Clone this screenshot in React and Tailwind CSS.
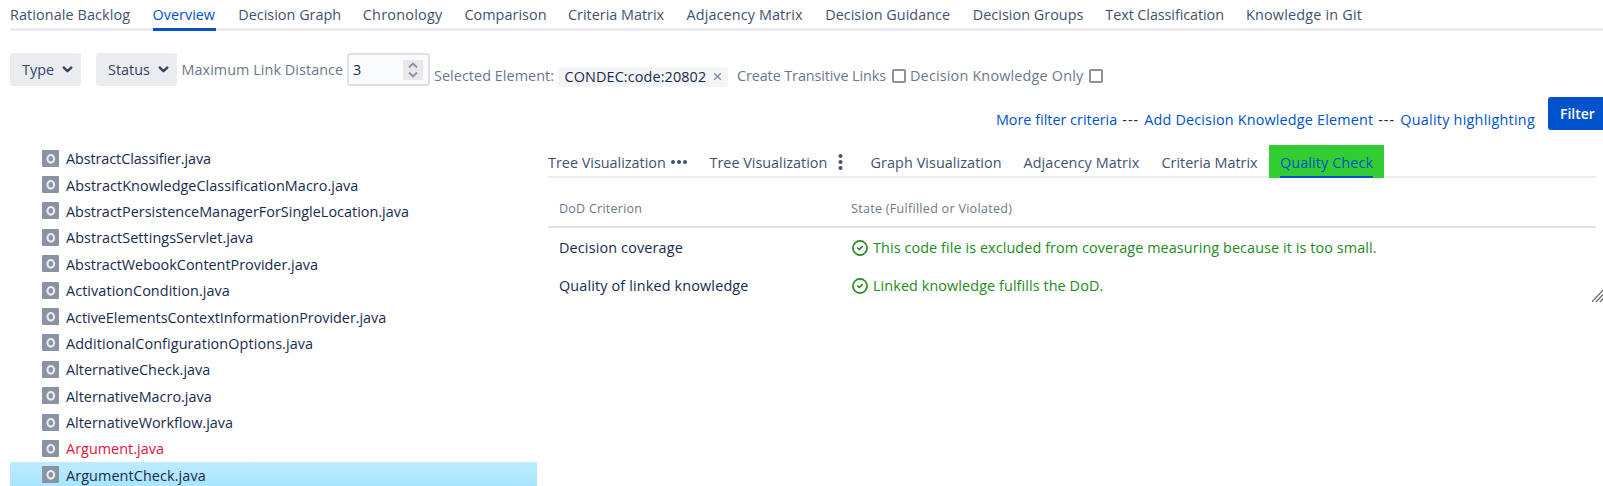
import { Fragment } from "react";

const mainTabs = [
  ["Rationale Backlog", "w-[120px] tracking-[0.1px]"],
  ["Overview", "w-[63px]"],
  ["Decision Graph", "w-[102px] tracking-[0.02px]"],
  ["Chronology", "w-[79px] tracking-[0.25px]"],
  ["Comparison", "w-[81px] tracking-[0.05px]"],
  ["Criteria Matrix", "w-[96px]"],
  ["Adjacency Matrix", "w-[116px] tracking-[0.12px]"],
  ["Decision Guidance", "w-[125px] tracking-[0.04px]"],
  ["Decision Groups", "w-[110px] tracking-[0.03px]"],
  ["Text Classification", "w-[118px] tracking-[-0.08px]"],
  ["Knowledge in Git", "w-[117px] tracking-[0.2px]"],
];

const files = [
  ["AbstractClassifier.java", "tracking-[-0.08px]"],
  ["AbstractKnowledgeClassificationMacro.java", "tracking-[0.05px]"],
  ["AbstractPersistenceManagerForSingleLocation.java", "tracking-[0.02px]"],
  ["AbstractSettingsServlet.java", "tracking-[0.06px]"],
  ["AbstractWebookContentProvider.java", ""],
  ["ActivationCondition.java", "tracking-[0.08px]"],
  ["ActiveElementsContextInformationProvider.java", "tracking-[-0.03px]"],
  ["AdditionalConfigurationOptions.java", "tracking-[0.1px]"],
  ["AlternativeCheck.java", "tracking-[0.03px]"],
  ["AlternativeMacro.java", ""],
  ["AlternativeWorkflow.java", ""],
  ["Argument.java", "tracking-[0.03px]"],
  ["ArgumentCheck.java", "tracking-[0.1px]"],
];

const links = [
  ["More filter criteria", ""],
  ["Add Decision Knowledge Element", "tracking-[0.17px]"],
  ["Quality highlighting", "tracking-[0.25px]"],
];

const criteria = [
  ["Decision coverage", "This code file is excluded from coverage measuring because it is too small.", "h-10"],
  ["Quality of linked knowledge", "Linked knowledge fulfills the DoD.", "h-[38px]"],
];

function Chevron() {
  return (
    <svg className="h-[7px] w-[11px]" viewBox="0 0 11 7" fill="none" stroke="#344563" strokeWidth="2.4" strokeLinecap="round" strokeLinejoin="round">
      <path d="M1.8 1.6 5.5 5.2 9.2 1.6" />
    </svg>
  );
}

function FileIcon() {
  return (
    <svg className="h-[17px] w-[17px] shrink-0" viewBox="0 0 17 17">
      <rect width="17" height="17" rx="1" fill="#8993a4" />
      <ellipse cx="8.8" cy="8.8" rx="3.3" ry="3.8" fill="none" stroke="#ebecf0" strokeWidth="2.1" />
    </svg>
  );
}

function CheckCircle() {
  return (
    <svg className="h-4 w-4 shrink-0" viewBox="0 0 16 16" fill="none" stroke="#228b22" strokeWidth="1.7" strokeLinecap="round" strokeLinejoin="round">
      <circle cx="8" cy="8" r="7.1" />
      <path d="M5.7 8 7.3 9.5 10.2 6.7" />
    </svg>
  );
}

function Checkbox() {
  return <span className="h-[14px] w-[14px] shrink-0 rounded-[2px] border-2 border-[#8f8f9d] bg-white" />;
}

export default function App() {
  return (
    <div className="h-[486px] w-[1603px] overflow-hidden whitespace-nowrap bg-white font-['Open_Sans',sans-serif] text-[14.4px] leading-5 text-[#172b4d]">
      <nav className="ml-[10px] flex h-[31px] gap-[22.6px] border-b-[3px] border-[#ebecf0] pt-[5px] text-[#42526e]">
        {mainTabs.map(([t, w]) => (
          <div key={t} className={`${w} h-[26px] shrink-0 ${t === "Overview" ? "border-b-[3px] border-[#0052cc] text-[#0052cc]" : ""}`}>
            {t}
          </div>
        ))}
      </nav>

      <div className="flex h-[66px] pl-[10px] pt-[22px] text-[#6b778c]">
        <button className="flex h-[33px] w-[71px] items-center justify-between rounded-[3px] bg-[#ebecf0] pl-3 pr-[8.5px] text-[#344563]">
          Type <Chevron />
        </button>
        <button className="ml-[15px] flex h-[33px] w-[81px] items-center justify-between rounded-[3px] bg-[#ebecf0] pl-3 pr-[8.5px] text-[#344563]">
          Status <Chevron />
        </button>
        <span className="ml-[4.5px] w-[165.5px] pt-[7px] tracking-[0.06px]">Maximum Link Distance</span>
        <div className="flex h-[33px] w-[83px] items-center justify-between rounded-[3px] border-2 border-[#dfe1e6] bg-[#fafbfc] pl-[4px] pr-[5px] text-[#172b4d]">
          3
          <span className="flex h-5 w-5 items-center justify-center bg-[#e9e9ed]">
            <svg className="h-4 w-[10px]" viewBox="0 0 10 16" fill="none" stroke="#8f8f9d" strokeWidth="1.8">
              <path d="M1 5.5 5 1.5 9 5.5M1 10.5 5 14.5 9 10.5" />
            </svg>
          </span>
        </div>
        <div className="ml-1 mt-[13px] flex h-5 items-center">
          <span className="w-[124px] tracking-[0.05px]">Selected Element:</span>
          <span className="mt-[1px] flex h-5 w-[170px] items-center justify-between rounded-[3px] bg-[#f4f5f7] pl-[6.5px] pr-[6px] tracking-[0.12px] text-[#172b4d]">
            CONDEC:code:20802
            <svg className="h-[9px] w-[9px]" viewBox="0 0 9 9" stroke="#8993a4" strokeWidth="1.6">
              <path d="M1.2 1.2 7.8 7.8M7.8 1.2 1.2 7.8" />
            </svg>
          </span>
          <span className="ml-[9px] w-[154.5px] tracking-[-0.1px]">Create Transitive Links</span>
          <Checkbox />
          <span className="ml-[4.5px] w-[178.5px] tracking-[0.18px]">Decision Knowledge Only</span>
          <Checkbox />
        </div>
      </div>

      <div className="flex h-[48px] justify-end text-[#0052cc]">
        <div className="flex gap-[5px] pt-[13px]">
          {links.map(([t, tracking], i) => (
            <Fragment key={t}>
              {i > 0 && <span className="w-[17px] tracking-[1px] text-[#172b4d]">---</span>}
              <a className={tracking}>{t}</a>
            </Fragment>
          ))}
        </div>
        <button className="ml-[13px] h-[33px] w-[55px] rounded-l-[3px] bg-[#0052cc] pl-3 text-left text-[14px] font-semibold text-white">Filter</button>
      </div>

      <div className="flex">
        <ul className="ml-[10px] w-[527px]">
          {files.map(([f, tracking]) => (
            <li
              key={f}
              className={`flex h-[26.4px] items-center gap-[7px] pl-8 ${tracking} ${
                f === "Argument.java" ? "text-[#dc143c]" : f === "ArgumentCheck.java" ? "bg-linear-to-b from-[#beebff] to-[#a8e4ff]" : ""
              }`}
            >
              <FileIcon />
              <span className="pt-[2px]">{f}</span>
            </li>
          ))}
        </ul>

        <section className="ml-[11px] w-[1055px]">
          <div className="flex h-[33px] w-[1048px] border-b-2 border-[#ebecf0] text-[#42526e]">
            <span className="flex w-[161.5px] pt-[8px]">
              <span className="w-[123px]">Tree Visualization</span>
              <svg className="mt-[6px] h-4 w-4" viewBox="0 0 16 16" fill="#42526e">
                <circle cx="2" cy="3" r="2" /><circle cx="8" cy="3" r="2" /><circle cx="14" cy="3" r="2" />
              </svg>
            </span>
            <span className="flex w-[161px] pt-[8px]">
              <span className="w-[128px]">Tree Visualization</span>
              <svg className="mt-px h-4 w-[5px]" viewBox="0 0 5 16" fill="#42526e">
                <circle cx="2.5" cy="2" r="2" /><circle cx="2.5" cy="8" r="2" /><circle cx="2.5" cy="14" r="2" />
              </svg>
            </span>
            <span className="w-[153px] pt-[8px] tracking-[0.07px]">Graph Visualization</span>
            <span className="w-[138px] pt-[8px] tracking-[0.1px]">Adjacency Matrix</span>
            <span className="w-[107.5px] pt-[8px]">Criteria Matrix</span>
            <span className="h-[33px] w-[115px] bg-[#32cd32] px-[11px] pt-[8px] text-[#0052cc]">
              <span className="block h-[25px] border-b-2 border-[#0052cc] tracking-[0.1px]">Quality Check</span>
            </span>
          </div>
          <table className="mt-[17px] w-[1048px] table-fixed">
            <thead>
              <tr className="h-[32px] border-b-2 border-[#dfe1e6] text-left align-top text-[12.5px] text-[#6b778c]">
                <th className="w-[303px] pl-[11px] pt-[4px] font-medium leading-5 tracking-[0.25px]">DoD Criterion</th>
                <th className="pt-[4px] font-medium leading-5 tracking-[0.3px]">State (Fulfilled or Violated)</th>
              </tr>
            </thead>
            <tbody>
              {criteria.map(([name, state, height]) => (
                <tr key={name} className={height}>
                  <td className="pl-[11px] tracking-[0.15px]">{name}</td>
                  <td className="text-[#228b22]">
                    <span className="flex items-center gap-[5px] pl-px tracking-[0.09px]">
                      <CheckCircle />
                      {state}
                    </span>
                  </td>
                </tr>
              ))}
            </tbody>
          </table>
          <svg className="-mt-[15px] ml-auto h-3 w-[11px]" viewBox="0 0 11 12" stroke="#6b6b6b" strokeWidth="1.3">
            <path d="M0 12 11 0M4 12 11 4.5M8 12 11 8.8" />
          </svg>
        </section>
      </div>
    </div>
  );
}
